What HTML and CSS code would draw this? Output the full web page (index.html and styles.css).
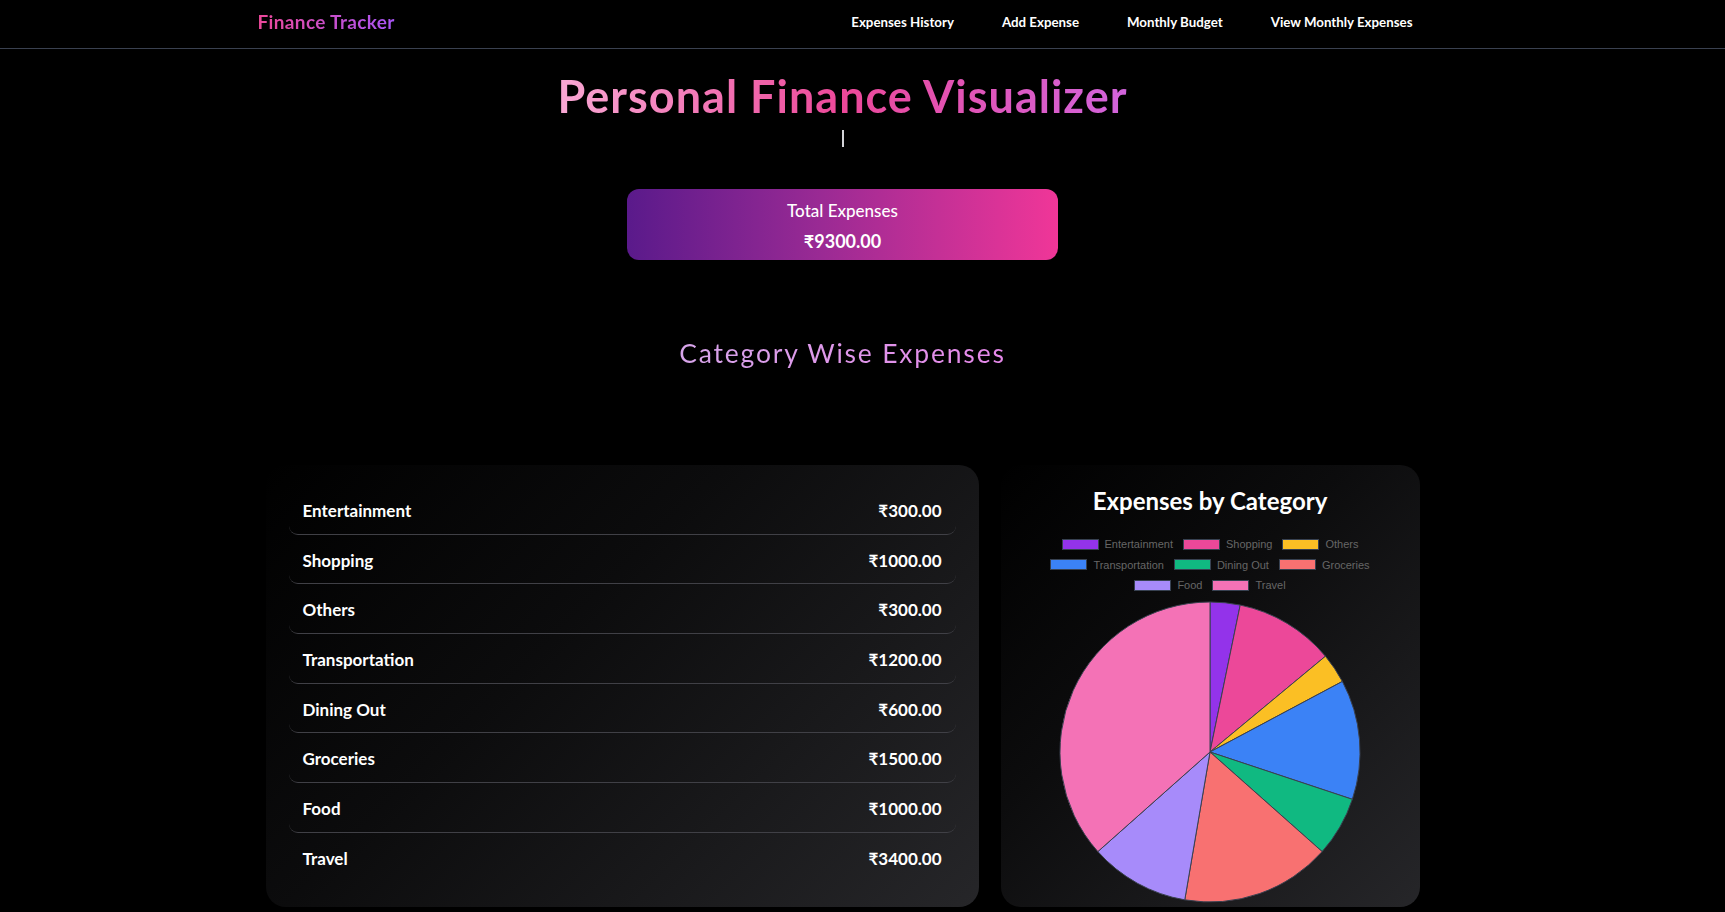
FILE: index.html
```html
<!DOCTYPE html>
<html lang="en">
<head>
<meta charset="utf-8">
<title>Personal Finance Visualizer</title>
<link rel="stylesheet" href="styles.css">
</head>
<body>
<nav class="nav">
  <div class="wrap">
    <div class="nav-inner">
      <a class="brand" href="#">Finance Tracker</a>
      <div class="links">
        <a href="#">Expenses History</a>
        <a href="#">Add Expense</a>
        <a href="#">Monthly Budget</a>
        <a href="#">View Monthly Expenses</a>
      </div>
    </div>
  </div>
</nav>

<main class="wrap">
  <h1 class="title"><span>Personal Finance Visualizer</span></h1>
  <div class="typing"><span class="cursor"></span></div>

  <div class="total">
    <div class="total-label">Total Expenses</div>
    <div class="total-value">₹9300.00</div>
  </div>

  <h2 class="section-title"><span>Category Wise Expenses</span></h2>

  <div class="cards">
    <div class="card list-card">
      <div class="row"><span>Entertainment</span><span>₹300.00</span></div>
      <div class="row"><span>Shopping</span><span>₹1000.00</span></div>
      <div class="row"><span>Others</span><span>₹300.00</span></div>
      <div class="row"><span>Transportation</span><span>₹1200.00</span></div>
      <div class="row"><span>Dining Out</span><span>₹600.00</span></div>
      <div class="row"><span>Groceries</span><span>₹1500.00</span></div>
      <div class="row"><span>Food</span><span>₹1000.00</span></div>
      <div class="row"><span>Travel</span><span>₹3400.00</span></div>
    </div>

    <div class="card chart-card">
      <h3 class="chart-title">Expenses by Category</h3>
      <div class="legend">
        <div class="item"><span class="swatch c-ent"></span>Entertainment</div>
        <div class="item"><span class="swatch c-shop"></span>Shopping</div>
        <div class="item"><span class="swatch c-oth"></span>Others</div>
        <div class="item"><span class="swatch c-tra"></span>Transportation</div>
        <div class="item"><span class="swatch c-din"></span>Dining Out</div>
        <div class="item"><span class="swatch c-gro"></span>Groceries</div>
        <div class="item"><span class="swatch c-food"></span>Food</div>
        <div class="item"><span class="swatch c-trv"></span>Travel</div>
      </div>
      <svg class="pie" width="302" height="302" viewBox="0 0 302 302">
        <g stroke="#3a4150" stroke-width="1" stroke-linejoin="round">
          <path fill="#9333ea" d="M151,151 L151,1 A150,150 0 0 1 181.19,4.07 Z"/>
          <path fill="#ec4899" d="M151,151 L181.19,4.07 A150,150 0 0 1 266.45,55.23 Z"/>
          <path fill="#fbbf24" d="M151,151 L266.45,55.23 A150,150 0 0 1 283.36,80.43 Z"/>
          <path fill="#3b82f6" d="M151,151 L283.36,80.43 A150,150 0 0 1 293.35,198.32 Z"/>
          <path fill="#10b981" d="M151,151 L293.35,198.32 A150,150 0 0 1 263.15,250.62 Z"/>
          <path fill="#f87171" d="M151,151 L263.15,250.62 A150,150 0 0 1 125.78,298.87 Z"/>
          <path fill="#a78bfa" d="M151,151 L125.78,298.87 A150,150 0 0 1 38.85,250.62 Z"/>
          <path fill="#f472b6" d="M151,151 L38.85,250.62 A150,150 0 0 1 151,1 Z"/>
        </g>
      </svg>
    </div>
  </div>
</main>
</body>
</html>
```

FILE: styles.css
```css
* { box-sizing: border-box; }

html, body {
  margin: 0;
  padding: 0;
  background: #000;
  color: #fff;
  font-family: Lato, "Noto Sans", "DejaVu Sans", sans-serif;
  overflow: hidden;
}

a { color: inherit; text-decoration: none; }

.wrap {
  width: 1685px;
}

/* nav */
.nav {
  border-bottom: 1px solid #3a4150;
}

.nav-inner {
  width: 1170px;
  margin: 0 auto;
  height: 48px;
  padding: 0 15px 5px 0;
  display: flex;
  align-items: center;
  justify-content: space-between;
}

.brand {
  font-size: 19px;
  letter-spacing: 0.35px;
  font-weight: 700;
  background: linear-gradient(90deg, #ec4899, #a855f7);
  -webkit-background-clip: text;
  background-clip: text;
  color: transparent;
}

.links {
  display: flex;
  gap: 48px;
}

.links a {
  font-size: 13.3px;
  font-weight: 700;
  color: #fff;
}

/* header */
.title {
  margin: 20px 0 0;
  text-align: center;
  font-size: 45px;
  letter-spacing: 1px;
  line-height: 1.2;
  font-weight: 700;
}

.title span {
  background: linear-gradient(90deg, #f9a8d4 0%, #ec4899 50%, #d264dc 100%);
  -webkit-background-clip: text;
  background-clip: text;
  color: transparent;
}

.typing {
  margin-top: 7px;
  height: 17px;
  text-align: center;
  line-height: 0;
}

.cursor {
  display: inline-block;
  width: 2px;
  height: 17px;
  background: #d4d4d8;
}

.total {
  width: 431px;
  margin: 42px auto 0;
  padding: 8px 0 5px;
  border-radius: 12px;
  background: linear-gradient(90deg, #5a1a8b 0%, #9a2a94 45%, #f03698 100%);
  text-align: center;
}

.total-label {
  font-size: 17px;
  line-height: 28px;
  font-weight: 500;
}

.total-value {
  margin-top: 2px;
  font-size: 18px;
  line-height: 28px;
  font-weight: 700;
}

.section-title {
  margin: 78px 0 0;
  text-align: center;
  font-size: 26.5px;
  line-height: 1.2;
  font-weight: 400;
  letter-spacing: 1.8px;
}

.section-title span {
  background: linear-gradient(90deg, #d7a5ea, #e688ea);
  -webkit-background-clip: text;
  background-clip: text;
  color: transparent;
}

/* cards */
.cards {
  margin: 95px auto 0;
  width: 1154px;
  display: grid;
  grid-template-columns: 713px 419px;
  gap: 22px;
}

.card {
  border-radius: 20px;
  background: linear-gradient(135deg, #000 0%, #0c0c0d 40%, #262629 100%);
}

.list-card {
  padding: 20px 23px 25px;
}

.row {
  display: flex;
  justify-content: space-between;
  padding: 14px 14px 10px;
  font-size: 17px;
  line-height: 24.7px;
  font-weight: 700;
  border-bottom: 1px solid #404046;
  border-radius: 9px;
}

.row:last-child {
  border-bottom-color: transparent;
}

.chart-card {
  padding: 21px 0 0;
  display: flex;
  flex-direction: column;
  align-items: center;
}

.chart-title {
  margin: 0;
  font-size: 24px;
  line-height: 30px;
  font-weight: 700;
  color: #fff;
}

.legend {
  margin-top: 18px;
  width: 360px;
  display: flex;
  flex-wrap: wrap;
  justify-content: center;
  column-gap: 10px;
}

.item {
  height: 20.5px;
  display: flex;
  align-items: center;
  font-family: "Liberation Sans", Arial, sans-serif;
  font-size: 11px;
  color: #666;
  white-space: nowrap;
}

.swatch {
  width: 37px;
  height: 11px;
  margin-right: 6px;
  border: 1px solid #374151;
}

.c-ent { background: #9333ea; }
.c-shop { background: #ec4899; }
.c-oth { background: #fbbf24; }
.c-tra { background: #3b82f6; }
.c-din { background: #10b981; }
.c-gro { background: #f87171; }
.c-food { background: #a78bfa; }
.c-trv { background: #f472b6; }

.pie {
  display: block;
  margin-top: 6px;
}
```
